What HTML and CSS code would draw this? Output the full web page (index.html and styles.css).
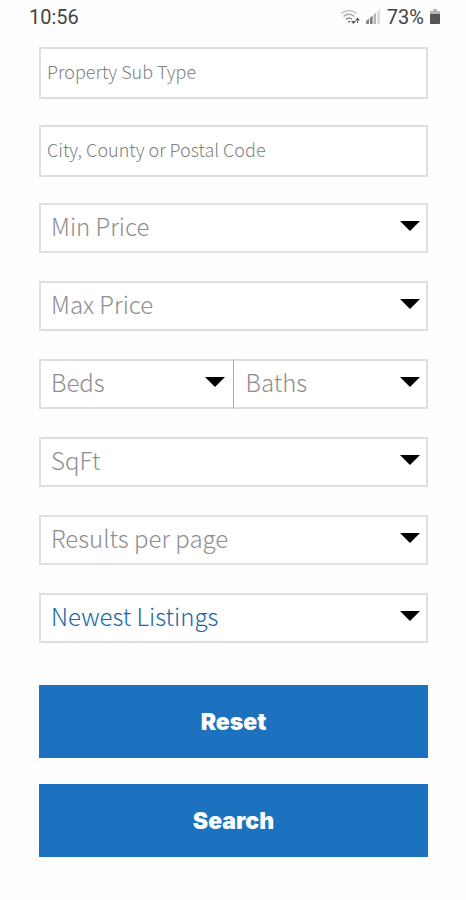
FILE: index.html
```html
<!DOCTYPE html>
<html lang="en">
<head>
<meta charset="utf-8">
<meta name="viewport" content="width=device-width, initial-scale=1">
<title>Property Search</title>
<link rel="stylesheet" href="styles.css">
</head>
<body>
<header class="status">
  <time class="clock">10:56</time>
  <div class="indicators">
    <svg class="wifi" viewBox="0 0 20 16" width="20" height="16" aria-hidden="true">
      <g fill="none" stroke-width="1.4">
        <path d="M1 4.500Q9 -1.500 17 4.500" stroke="#c4c4c4"/>
        <path d="M3.500 7.500Q9 3 14.500 7.500" stroke="#aaa"/>
        <path d="M6 10.500Q9 7.500 12 10.500" stroke="#888"/>
      </g>
      <path d="M7.500 12h3L9 14z" fill="#666"/>
      <path d="M11 12h5l-2.500 3zM15 11.500h5L17.500 8.500zM17 11h1v3h-1z" fill="#555"/>
    </svg>
    <svg class="signal" viewBox="0 0 15 16" width="15" height="16" aria-hidden="true">
      <path d="M0 15v-3l3-2.500V15z" fill="#888"/>
      <path d="M4 15V9l2.500-2.500V15z" fill="#777"/>
      <path d="M7.500 15V6L10 3.500V15z" fill="#b5b5b5"/>
      <path d="M11 15V3l3-3v15z" fill="#dcdcdc"/>
    </svg>
    <span class="percent">73%</span>
    <svg class="battery" viewBox="0 0 10 16" width="10" height="16" aria-hidden="true">
      <path d="M3 0h4v2h3v3H0V2h3z" fill="#b5b5b5"/>
      <path d="M0 5h10v9q0 1-1 1H1q-1 0-1-1z" fill="#555"/>
    </svg>
  </div>
</header>
<main>
  <form class="search">
    <input class="field text" type="text" placeholder="Property Sub Type" aria-label="Property Sub Type">
    <input class="field text" type="text" placeholder="City, County or Postal Code" aria-label="City, County or Postal Code">
    <div class="selects">
      <select class="field" aria-label="Min Price"><option>Min Price</option></select>
      <select class="field" aria-label="Max Price"><option>Max Price</option></select>
      <div class="pair">
        <select class="field" aria-label="Beds"><option>Beds</option></select>
        <select class="field" aria-label="Baths"><option>Baths</option></select>
      </div>
      <select class="field" aria-label="Square feet"><option>SqFt</option></select>
      <select class="field" aria-label="Results per page"><option>Results per page</option></select>
      <select class="field chosen" aria-label="Sort order"><option>Newest Listings</option></select>
    </div>
    <div class="actions">
      <button class="action" type="reset">Reset</button>
      <button class="action" type="submit">Search</button>
    </div>
  </form>
</main>
</body>
</html>
```
FILE: styles.css
```css
* {
  box-sizing: border-box;
}

body {
  margin: 0;
  background: #fefefe;
  font-family: "Noto Sans CJK SC", "Noto Sans", sans-serif;
  font-weight: 300;
}

.status {
  display: flex;
  align-items: center;
  justify-content: space-between;
  height: 34px;
  padding: 0 26px 0 29px;
  font: 400 20px/24px Roboto, sans-serif;
  color: #444;
}

.indicators {
  display: flex;
  align-items: center;
  gap: 6px;
}

.search {
  display: flex;
  flex-direction: column;
  gap: 26px;
  padding: 13px 38px 32px 39px;
}

.field {
  display: block;
  width: 100%;
  min-width: 0;
  height: 50px;
  margin: 0;
  padding: 0 36px 6px 10px;
  border: 2px solid #dedede;
  border-radius: 0;
  background: #fff;
  color: #8e8e8e;
  font: inherit;
  font-size: 24px;
}

.text {
  height: 52px;
  padding: 0 6px 4px;
  font-size: 18px;
}

.text::placeholder {
  color: #808080;
  opacity: 1;
}

select.field {
  appearance: none;
  background: #fff url("data:image/svg+xml,%3Csvg xmlns='http://www.w3.org/2000/svg' viewBox='0 0 20 10'%3E%3Cpath d='M0 0h20L10 10z'/%3E%3C/svg%3E") no-repeat right 6px top 16px / 20px 10px;
}

.selects {
  display: grid;
  gap: 28px;
}

.pair {
  display: grid;
  grid-template-columns: 1fr 1fr;
}

.pair .field:first-child {
  border-right: 1px solid #aaa;
  background-position: right 8px top 16px;
}

.pair .field:last-child {
  padding-left: 12px;
  border-left: 0;
}

select.chosen {
  color: #1766a8;
}

.actions {
  display: grid;
  gap: 26px;
  padding-top: 16px;
}

.action {
  height: 73px;
  padding: 0;
  border: 0;
  background: #1d72bf;
  color: #fff;
  font: 900 23px/28px Inter, sans-serif;
}
```
